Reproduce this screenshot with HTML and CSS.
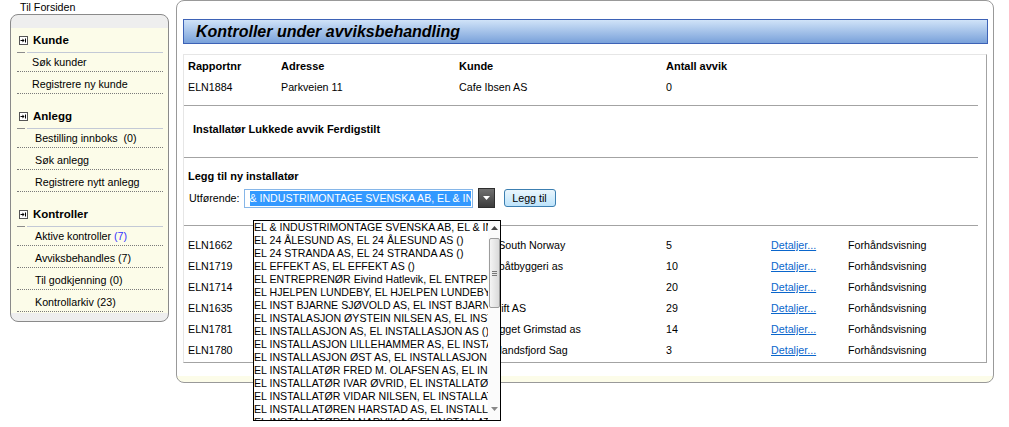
FILE: index.html
```html
<!DOCTYPE html>
<html lang="no">
<head>
  <meta charset="UTF-8">
  <title>Kontroller under avviksbehandling</title>
  <link rel="stylesheet" href="styles.css">
</head>
<body>
<div class="page">
  <aside class="side">
    <a class="home" href="#">Til Forsiden</a>
    <nav class="menu">
      <div class="group g-kunde">
        <div class="head"><svg class="ico" viewBox="0 0 9 9"><rect x=".5" y=".5" width="8" height="8" fill="#fff" stroke="#555"/><path d="M1.5 4.5h3.5M6.5 2.5v4" stroke="#000"/><path d="M3.5 2.5l2 2-2 2z" fill="#000"/></svg>Kunde</div>
        <div class="rule"></div>
        <a class="item" href="#">Søk kunder</a>
        <a class="item" href="#">Registrere ny kunde</a>
      </div>
      <div class="group">
        <div class="head"><svg class="ico" viewBox="0 0 9 9"><rect x=".5" y=".5" width="8" height="8" fill="#fff" stroke="#555"/><path d="M1.5 4.5h3.5M6.5 2.5v4" stroke="#000"/><path d="M3.5 2.5l2 2-2 2z" fill="#000"/></svg>Anlegg</div>
        <div class="rule"></div>
        <a class="item" href="#">Bestilling innboks &nbsp;(0)</a>
        <a class="item" href="#">Søk anlegg</a>
        <a class="item" href="#">Registrere nytt anlegg</a>
      </div>
      <div class="group">
        <div class="head"><svg class="ico" viewBox="0 0 9 9"><rect x=".5" y=".5" width="8" height="8" fill="#fff" stroke="#555"/><path d="M1.5 4.5h3.5M6.5 2.5v4" stroke="#000"/><path d="M3.5 2.5l2 2-2 2z" fill="#000"/></svg>Kontroller</div>
        <div class="rule"></div>
        <a class="item" href="#">Aktive kontroller <span class="count">(7)</span></a>
        <a class="item" href="#">Avviksbehandles (7)</a>
        <a class="item" href="#">Til godkjenning (0)</a>
        <a class="item" href="#">Kontrollarkiv (23)</a>
      </div>
    </nav>
  </aside>

  <main class="panel">
    <h1 class="title">Kontroller under avviksbehandling</h1>
    <div class="box">
      <div class="row th">
        <span>Rapportnr</span><span>Adresse</span><span>Kunde</span><span>Antall avvik</span>
      </div>
      <div class="row">
        <span>ELN1884</span><span>Parkveien 11</span><span>Cafe Ibsen AS</span><span>0</span>
      </div>
      <div class="sep"></div>

      <div class="status">Installatør Lukkede avvik Ferdigstilt</div>
      <div class="sep sep-mid"></div>

      <div class="add-title">Legg til ny installatør</div>
      <div class="form">
        <label>Utførende:</label>
        <div class="combo"><span>&amp; INDUSTRIMONTAGE SVENSKA AB, EL &amp; INDUSTRIMONTAGE SVENSKA AB ()</span></div>
        <div class="drop"><svg width="7" height="4" viewBox="0 0 7 4"><path d="M0 0h7L3.5 4z" fill="#fff"/></svg></div>
        <button class="btn" type="button">Legg til</button>
      </div>
      <div class="sep sep-low"></div>

      <div class="rows">
        <div class="row"><span>ELN1662</span><span>Storgata 12</span><span>Bravida South Norway</span><span>5</span><a class="link" href="#">Detaljer...</a><span>Forhåndsvisning</span></div>
        <div class="row"><span>ELN1719</span><span>Strandveien 4</span><span>Hansen båtbyggeri as</span><span>10</span><a class="link" href="#">Detaljer...</a><span>Forhåndsvisning</span></div>
        <div class="row"><span>ELN1714</span><span>Industriveien 8</span><span>Amfi AS</span><span>20</span><a class="link" href="#">Detaljer...</a><span>Forhåndsvisning</span></div>
        <div class="row"><span>ELN1635</span><span>Havnegata 2</span><span>Marinadrift AS</span><span>29</span><a class="link" href="#">Detaljer...</a><span>Forhåndsvisning</span></div>
        <div class="row"><span>ELN1781</span><span>Kirkegata 17</span><span>Hjem Bygget Grimstad as</span><span>14</span><a class="link" href="#">Detaljer...</a><span>Forhåndsvisning</span></div>
        <div class="row"><span>ELN1780</span><span>Sagveien 5</span><span>Brødr. Ølandsfjord Sag</span><span>3</span><a class="link" href="#">Detaljer...</a><span>Forhåndsvisning</span></div>
      </div>

      <!-- open dropdown of the Utførende combo -->
      <div class="list">
        <div class="opts">
          <div>EL &amp; INDUSTRIMONTAGE SVENSKA AB, EL &amp; INDUSTRIMONTAGE SVENSKA AB ()</div>
          <div>EL 24 ÅLESUND AS, EL 24 ÅLESUND AS ()</div>
          <div>EL 24 STRANDA AS, EL 24 STRANDA AS ()</div>
          <div>EL EFFEKT AS, EL EFFEKT AS ()</div>
          <div>EL ENTREPRENØR Eivind Hatlevik, EL ENTREPRENØR Eivind Hatlevik ()</div>
          <div>EL HJELPEN LUNDEBY, EL HJELPEN LUNDEBY ()</div>
          <div>EL INST BJARNE SJØVOLD AS, EL INST BJARNE SJØVOLD AS ()</div>
          <div>EL INSTALASJON ØYSTEIN NILSEN AS, EL INSTALASJON ØYSTEIN NILSEN AS ()</div>
          <div>EL INSTALLASJON AS, EL INSTALLASJON AS ()</div>
          <div>EL INSTALLASJON LILLEHAMMER AS, EL INSTALLASJON LILLEHAMMER AS ()</div>
          <div>EL INSTALLASJON ØST AS, EL INSTALLASJON ØST AS ()</div>
          <div>EL INSTALLATØR FRED M. OLAFSEN AS, EL INSTALLATØR FRED M. OLAFSEN AS ()</div>
          <div>EL INSTALLATØR IVAR ØVRID, EL INSTALLATØR IVAR ØVRID ()</div>
          <div>EL INSTALLATØR VIDAR NILSEN, EL INSTALLATØR VIDAR NILSEN ()</div>
          <div>EL INSTALLATØREN HARSTAD AS, EL INSTALLATØREN HARSTAD AS ()</div>
          <div>EL INSTALLATØREN NARVIK AS, EL INSTALLATØREN NARVIK AS ()</div>
        </div>
        <div class="scroll">
          <svg class="arrow-up" width="7" height="4" viewBox="0 0 7 4"><path d="M0 4h7L3.5 0z" fill="#444"/></svg>
          <div class="thumb"><span></span><span></span><span></span></div>
          <svg class="arrow-down" width="7" height="4" viewBox="0 0 7 4"><path d="M0 0h7L3.5 4z" fill="#888"/></svg>
        </div>
      </div>
    </div>
  </main>
</div>
</body>
</html>
```

FILE: styles.css
```css
html,
body {
  min-height: 427px;
}
body {
  margin: 0;
  font-family: "Liberation Sans", Arial, sans-serif;
  font-size: 10.7px;
  color: #000;
  background: #fff;
}
a {
  color: #000;
  text-decoration: none;
}
.page {
  display: flex;
  align-items: flex-start;
  gap: 7px;
  padding-left: 10px;
  min-height: 427px;
}

/* left menu */
.side {
  width: 159px;
  flex: none;
}
.home {
  display: block;
  line-height: 14px;
  padding-left: 10px;
}
.menu {
  border: 1px solid #8a8a8a;
  border-radius: 8px;
  padding: 13px 5px 9px 6px;
  background: linear-gradient(#eeeeee 0 13px, #fcfce9 13px calc(100% - 8px), #eeeeee calc(100% - 8px));
}
.head {
  display: flex;
  align-items: center;
  gap: 5px;
  padding-left: 2px;
  font-weight: bold;
  font-size: 11.5px;
  line-height: 24px;
}
.group + .group .head {
  padding-top: 10px;
}
.ico {
  width: 9px;
  height: 9px;
}
.rule {
  height: 1px;
  background: linear-gradient(to right, #8c8c8c 0 8px, transparent 8px 10px, #c3c9d6 10px);
}
.item {
  display: block;
  line-height: 18px;
  margin-top: 3px;
  padding-left: 18px;
  border-bottom: 1px dotted #7a7a7a;
}
.rule + .item {
  margin-top: 0;
}
.g-kunde .item {
  padding-left: 15px;
}
.count {
  color: #3333ff;
}

/* main panel */
.panel {
  width: 818px;
  box-sizing: border-box;
  border: 1px solid #999;
  border-radius: 8px;
  padding: 18px 5px 19px 6px;
  background: linear-gradient(#fff calc(100% - 6px), #fcfce9 calc(100% - 6px));
}
.title {
  margin: 0;
  height: 23px;
  line-height: 23px;
  padding-left: 12px;
  border: 1px solid #3d62b6;
  background: linear-gradient(#d0e3f8, #79a1da);
  font-size: 16px;
  font-style: italic;
  font-weight: bold;
}
.box {
  position: relative;
  margin: 10px 1px 0 0;
  padding: 1px 0;
  border: 1px solid;
  border-color: #e6e6e6 #a3a3a3 #a3a3a3 #e6e6e6;
}
.row {
  display: grid;
  grid-template-columns: 93px 178px 207px 105px 77px 1fr;
  padding-left: 4px;
  line-height: 21px;
  white-space: nowrap;
}
.row > span {
  overflow: hidden;
}
.th {
  font-weight: bold;
  font-size: 11px;
}
.sep {
  height: 1px;
  margin: 7px 8px 0 0;
  background: #a3a3a3;
}
.sep-mid {
  margin-top: 17px;
}
.sep-low {
  margin-top: 16px;
}
.status {
  padding: 13px 0 0 9px;
  line-height: 21px;
  font-weight: bold;
  font-size: 11px;
}
.add-title {
  margin-top: 8px;
  padding-left: 4px;
  line-height: 21px;
  font-weight: bold;
  font-size: 11px;
}
.form {
  display: flex;
  align-items: center;
  height: 22px;
  padding-left: 5px;
}
.combo {
  width: 229px;
  height: 19px;
  margin-left: 4px;
  box-sizing: border-box;
  border: 1px solid #86b6e8;
  padding: 0 1px 0 5px;
  display: flex;
  align-items: center;
  overflow: hidden;
}
.combo span {
  flex: 1;
  overflow: hidden;
  white-space: nowrap;
  line-height: 15px;
  font-size: 10.6px;
  color: #fff;
  background: #3399ff;
}
.drop {
  width: 17px;
  height: 20px;
  margin-left: 5px;
  box-sizing: border-box;
  border: 1px solid #2e2e2e;
  background: linear-gradient(#707070, #3c3c3c);
  display: flex;
  align-items: center;
  justify-content: center;
}
.btn {
  width: 52px;
  height: 18px;
  margin-left: 9px;
  padding: 0;
  border: 1px solid #3c7fb1;
  border-radius: 3px;
  background: linear-gradient(#eaf6fd, #bde3fb);
  font: inherit;
  color: #000;
}
.rows {
  margin-top: 9px;
}
.link {
  color: #0a66cc;
  text-decoration: underline;
}

/* opened dropdown list */
.list {
  position: absolute;
  z-index: 2;
  left: 69px;
  top: 165px;
  width: 248px;
  height: 201px;
  box-sizing: border-box;
  border: 1px solid #000;
  background: #fff;
  display: flex;
  overflow: hidden;
}
.opts {
  flex: 1;
  overflow: hidden;
  white-space: nowrap;
  font-size: 10.6px;
  line-height: 13px;
}
.scroll {
  position: relative;
  width: 12px;
  flex: none;
  background: #fbfbfb;
}
.arrow-up {
  position: absolute;
  left: 3px;
  top: 5px;
}
.arrow-down {
  position: absolute;
  left: 3px;
  bottom: 9px;
}
.thumb {
  position: absolute;
  left: 1px;
  top: 17px;
  width: 11px;
  height: 70px;
  box-sizing: border-box;
  border: 1px solid #9c9c9c;
  border-radius: 2px;
  background: linear-gradient(to right, #f4f4f4, #dadada);
  display: flex;
  flex-direction: column;
  justify-content: center;
  align-items: center;
  gap: 1px;
}
.thumb span {
  width: 5px;
  height: 1px;
  background: #777;
}
```
